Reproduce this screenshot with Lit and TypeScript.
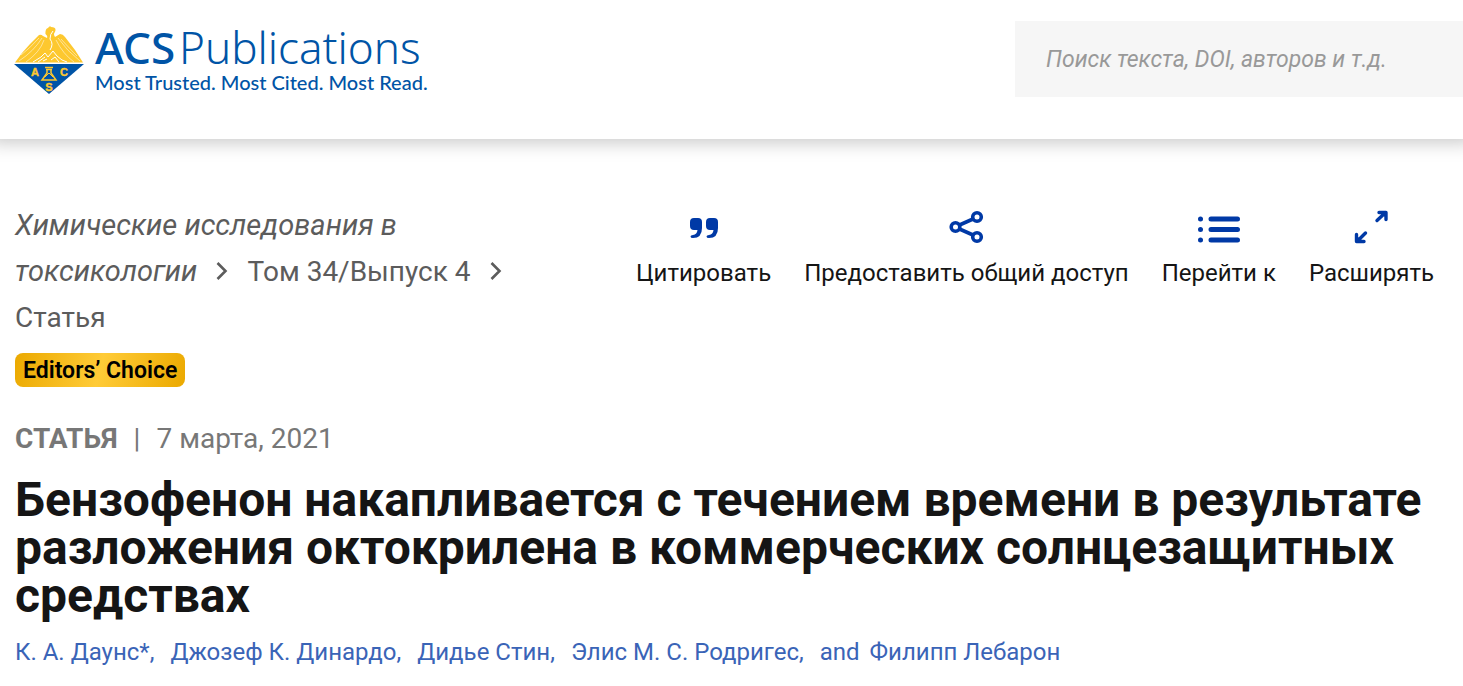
import { LitElement, html, css, svg } from "lit";
import { customElement } from "lit/decorators.js";

const emblem = svg`
  <svg class="emblem" viewBox="0 0 70 68" aria-hidden="true">
    <path fill="#fdc82f" d="M1 36.500L8 27L16 18L25 9Q27 8 29 10L33 12Q34 10 31.500 8Q31 3 34 2Q36 -1 37 1Q43 1 41 6Q39 8 41 11L46 8Q49 8 51 11L61 24L69 36.500Z"/>
    <g fill="none" stroke="#fff" stroke-width=".5">
      <path d="M28 12Q20 25 5 35M30 14Q26 26 12 36M25 12Q15 23 7 29M42 14Q49 28 60 36M44 12Q53 25 66 35M47 13Q57 24 63 30"/>
      <path stroke-width="1" d="M39 5Q36 8 36 13Q40 18 36 24M19 36L27 31L31 27L34 31L39 25L43 30L48 34L53 36M24 36L31 31M37 34L41 31L45 36M29 35L33 33"/>
    </g>
    <path fill="#0054a6" d="M0 38H70L35 68Z"/>
    <g fill="none" stroke="#fdc82f" stroke-width="1.500">
      <path d="M31 41.500H39M32 43.500H38M33 44V47L28 54H42L37 47V44"/>
      <path stroke-width="1" d="M31 51L35 47L39 51"/>
    </g>
    <g fill="#fdc82f" stroke="#fdc82f" stroke-width=".4" font-family="Liberation Sans, sans-serif" font-weight="700" font-size="11" text-anchor="middle">
      <text x="21" y="50">A</text><text x="50" y="50">C</text><text x="35" y="65">S</text>
    </g>
  </svg>`;

const chevron = svg`
  <svg class="chevron" viewBox="0 0 12 20" aria-hidden="true">
    <path d="M1.500 2L9.500 10L1.500 18" fill="none" stroke="currentColor" stroke-width="2.600"/>
  </svg>`;

const icons = {
  cite: svg`<svg viewBox="0 0 44 36" aria-hidden="true"><g fill="currentColor">
    <path d="M12 8H16Q20 8 20 12V18Q20 28 11 28Q8.500 28 8.500 26.500Q8.500 25 11 25Q15 24.500 15.500 20H12Q8 20 8 16V12Q8 8 12 8Z"/>
    <path d="M28 8H32Q36 8 36 12V18Q36 28 27 28Q24.500 28 24.500 26.500Q24.500 25 27 25Q31 24.500 31.500 20H28Q24 20 24 16V12Q24 8 28 8Z"/></g></svg>`,
  share: svg`<svg viewBox="0 0 44 36" aria-hidden="true"><g fill="none" stroke="currentColor" stroke-width="3.600">
    <circle cx="11.500" cy="17" r="4.300"/><circle cx="33" cy="7" r="4.300"/><circle cx="33" cy="27" r="4.300"/>
    <path d="M15.500 15L29 9M15.500 19L29 25"/></g></svg>`,
  jump: svg`<svg viewBox="0 0 44 36" aria-hidden="true"><g fill="none" stroke="currentColor" stroke-width="5" stroke-linecap="round">
    <path d="M14 9H40.500M14 19.500H40.500M14 30H40.500M3.500 9h.01M3.500 19.500h.01M3.500 30h.01"/></g></svg>`,
  expand: svg`<svg viewBox="0 0 44 36" aria-hidden="true">
    <g fill="none" stroke="currentColor" stroke-width="3.400" stroke-linecap="round" stroke-linejoin="round">
    <path d="M28 10.500L36 3M30 2.500H37V9.500M16.500 23L9 30.500M7.500 24.500V31.500H15"/></g>
    <path fill="currentColor" d="M31 2H38V9ZM7 25V32H14Z"/></svg>`,
};

const actions = [
  { icon: icons.cite, label: "Цитировать" },
  { icon: icons.share, label: "Предоставить общий доступ" },
  { icon: icons.jump, label: "Перейти к" },
  { icon: icons.expand, label: "Расширять" },
];

const authors = ["К. А. Даунс*,", "Джозеф К. Динардо,", "Дидье Стин,", "Элис М. С. Родригес,"];

@customElement("app-root")
export class AppRoot extends LitElement {
  static styles = css`
    :host { display: block; min-height: 100vh; overflow-x: hidden; background: #fff; color: #151515; font-family: Roboto, sans-serif; }
    a { color: inherit; text-decoration: none; }
    .header { display: flex; justify-content: space-between; align-items: flex-start; padding: 21px 0 42px 14px; box-shadow: 0 -8px 18px 11px rgba(0, 0, 0, 0.23); }
    .brand { display: flex; gap: 11px; padding-top: 5px; color: #0054a6; white-space: nowrap; }
    .emblem { width: 70px; height: 68px; }
    .wordmark { display: flex; flex-direction: column; }
    .name { display: flex; gap: 4px; font-family: "Noto Sans", "Open Sans", sans-serif; font-size: 44px; line-height: 42px; }
    .acs { font-weight: 500; }
    .pub { font-weight: 300; }
    .tagline { font-family: Lato, sans-serif; font-size: 20px; font-weight: 500; line-height: 28px; }
    .search { width: 448px; }
    .search input { box-sizing: border-box; width: 100%; height: 76px; padding: 0 31px; border: 0; border-radius: 0; background: #f6f6f6; font: italic 23px/28px Roboto, sans-serif; color: #333; }
    .search input::placeholder { color: #999; opacity: 1; }
    .main { padding: 64px 15px 20px; }
    .top { display: flex; justify-content: space-between; align-items: flex-start; }
    .crumbs { flex: 0 1 520px; color: #5c5c5c; font-size: 28px; line-height: 46px; }
    .journal { font-size: 29px; font-style: italic; line-height: 40px; }
    .chevron { width: 12px; height: 20px; margin: 0 13px 0 12px; }
    .actions { display: flex; gap: 33px; padding: 7px 14px 0 0; }
    .action { display: flex; flex-direction: column; align-items: center; gap: 12px; padding: 0; border: 0; background: none; color: #151515; font: 24px/30px Roboto, sans-serif; white-space: nowrap; cursor: pointer; }
    .action svg { width: 44px; height: 36px; color: #0039a6; }
    .badge { display: inline-block; margin-top: 12px; padding: 2px 8px 0; border-radius: 8px; background: linear-gradient(105deg, #eba900, #ffcb37 50%, #eba900); color: #000; font-size: 23px; font-weight: 600; line-height: 32px; }
    .meta { display: flex; gap: 16px; margin-top: 35px; color: #777; font-size: 28px; line-height: 34px; }
    .kind { font-weight: 700; }
    .title { margin: 20px 0 0; font-size: 48px; font-weight: 700; line-height: 48px; }
    .authors { display: flex; flex-wrap: wrap; margin: 16px 0 0; padding: 0; list-style: none; color: #3a64b7; font-size: 24px; line-height: 32px; }
    .authors li { margin-right: 16px; }
    .authors .and { margin-right: 10px; }
  `;

  render() {
    return html`
      <header class="header">
        <a class="brand" href="#" aria-label="ACS Publications">
          ${emblem}
          <span class="wordmark">
            <span class="name"><span class="acs">ACS</span><span class="pub">Publications</span></span>
            <span class="tagline">Most Trusted. Most Cited. Most Read.</span>
          </span>
        </a>
        <form class="search" role="search">
          <input type="text" aria-label="Поиск" placeholder="Поиск текста, DOI, авторов и т.д." />
        </form>
      </header>
      <main class="main">
        <div class="top">
          <nav class="crumbs">
            <a class="journal" href="#">Химические исследования в токсикологии</a>${chevron}
            <a href="#">Том 34/Выпуск 4</a>${chevron}
            <span>Статья</span>
          </nav>
          <div class="actions">
            ${actions.map((a) => html`<button class="action" type="button">${a.icon}<span>${a.label}</span></button>`)}
          </div>
        </div>
        <a class="badge" href="#">Editors’ Choice</a>
        <div class="meta"><span class="kind">СТАТЬЯ</span><span>|</span><time datetime="2021-03-07">7 марта, 2021</time></div>
        <h1 class="title">Бензофенон накапливается с течением времени в результате разложения октокрилена в коммерческих солнцезащитных средствах</h1>
        <ul class="authors">
          ${authors.map((name) => html`<li><a href="#">${name}</a></li>`)}
          <li class="and">and</li>
          <li><a href="#">Филипп Лебарон</a></li>
        </ul>
      </main>
    `;
  }
}
